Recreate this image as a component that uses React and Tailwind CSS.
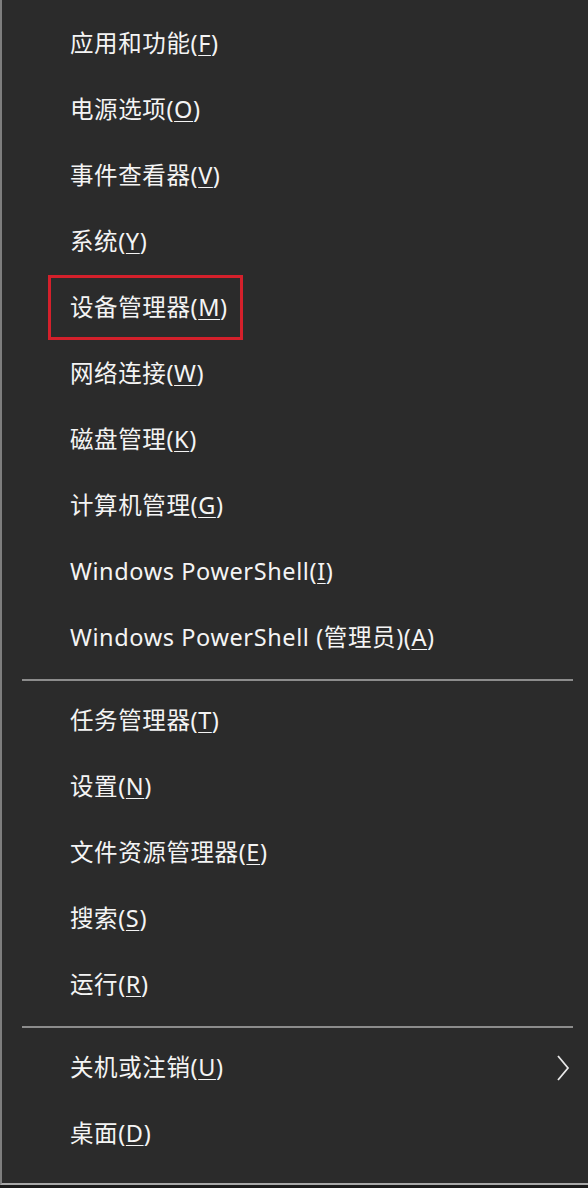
import React from "react";

const font = { fontFamily: '"Noto Sans", "Noto Sans CJK SC", sans-serif' };

function Item({ label, k, boxed, arrow }) {
  return (
    <div className="relative h-[66px] flex items-center pl-[68px] pr-[18px]">
      {boxed && (
        <div className="absolute left-[46px] top-[0px] w-[195px] h-[65px] border-[3px] border-[#d4202b]" />
      )}
      <span className="text-[23.5px] text-[#f4f4f4] leading-none tracking-[0.6px]">
        {label}(<span className="underline underline-offset-[3px] decoration-[1px]">{k}</span>)
      </span>
      {arrow && (
        <svg className="ml-auto" width="14" height="26" viewBox="0 0 14 26">
          <path d="M2 1 L12 13 L2 25" fill="none" stroke="#e8e8e8" strokeWidth="1.8" />
        </svg>
      )}
    </div>
  );
}

function Sep() {
  return (
    <div className="h-[17px] flex items-center pl-[20px] pr-[15px]">
      <div className="h-[2px] w-full bg-[#8c8c8c]" />
    </div>
  );
}

export default function App() {
  const g1 = [
    ["应用和功能", "F"],
    ["电源选项", "O"],
    ["事件查看器", "V"],
    ["系统", "Y"],
    ["设备管理器", "M", true],
    ["网络连接", "W"],
    ["磁盘管理", "K"],
    ["计算机管理", "G"],
    ["Windows PowerShell", "I"],
    ["Windows PowerShell (管理员)", "A"],
  ];
  const g2 = [
    ["任务管理器", "T"],
    ["设置", "N"],
    ["文件资源管理器", "E"],
    ["搜索", "S"],
    ["运行", "R"],
  ];
  return (
    <div className="w-[588px] h-[1188px] bg-[#1a1a1a] overflow-hidden" style={font}>
      <div className="h-[1185px] bg-[#2b2b2b] border-l-2 border-[#7e7e7e] border-b-2 border-b-[#a8a8a8] flex flex-col pt-[11px]">
        {g1.map(([l, k, b]) => (
          <Item key={l} label={l} k={k} boxed={b} />
        ))}
        <Sep />
        {g2.map(([l, k]) => (
          <Item key={l} label={l} k={k} />
        ))}
        <Sep />
        <Item label="关机或注销" k="U" arrow />
        <Item label="桌面" k="D" />
      </div>
    </div>
  );
}
